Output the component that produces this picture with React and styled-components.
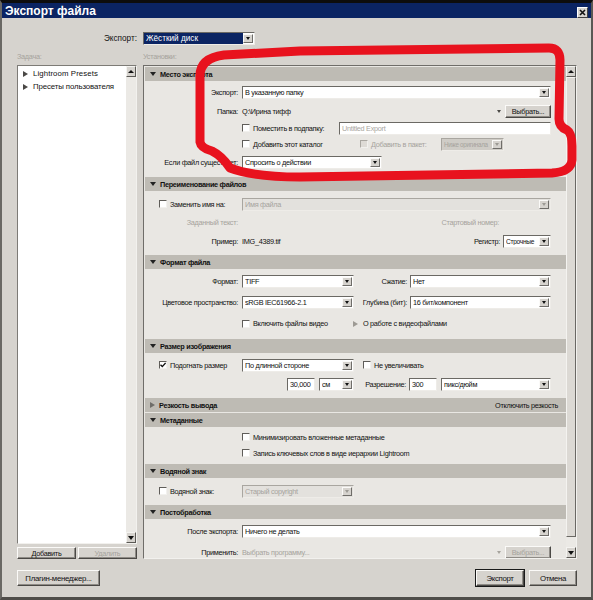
import React from 'react';
import styled, { createGlobalStyle } from 'styled-components';

const GlobalStyle = createGlobalStyle`
  html, body { margin: 0; padding: 0; background: #111; }
  body {
    font-family: "Liberation Sans", Arial, sans-serif;
    font-size: 7.3px;
    letter-spacing: -0.3px;
    color: #111;
  }
  * { box-sizing: border-box; }
`;

const Window = styled.div`
  position: relative;
  width: 593px;
  height: 600px;
  border-top: 3px solid #0d0d0d;
  border-left: 2px solid #6a6864;
  border-right: 2px solid #5a5854;
  border-bottom: 3px solid #4f4d49;
  background: #d6d3ce;
  overflow: hidden;
`;

const TitleBar = styled.div`
  height: 15px;
  background: #0b2463;
  display: flex;
  align-items: center;
  justify-content: space-between;
  padding: 0 3px;
`;

const Title = styled.span`
  color: #fff;
  font-weight: bold;
  font-size: 12px;
  letter-spacing: 0;
`;

const CloseBtn = styled.div`
  width: 11px;
  height: 11px;
  margin-top: 3px;
  background: #d6d3ce;
  border: 1px solid;
  border-color: #fff #404040 #404040 #fff;
  display: flex;
  align-items: center;
  justify-content: center;
`;

const Body = styled.div`
  padding: 14px 14px 0 15px;
  display: flex;
  flex-direction: column;
`;

const TwoCol = styled.div`
  display: grid;
  grid-template-columns: 120px 434px;
  column-gap: 6px;
  height: ${p => p.$h}px;
  margin-top: ${p => p.$mt || 0}px;
  align-items: ${p => p.$align || 'stretch'};
`;

const TopLabel = styled.span`
  text-align: right;
  font-size: 8.2px;
  letter-spacing: 0;
`;

const Caption = styled.span`
  color: #a6a39d;
  line-height: 10px;
`;

const LeftCol = styled.div`
  display: flex;
  flex-direction: column;
  gap: 3px;
`;

const ListBox = styled.div`
  height: 479px;
  display: flex;
  background: #fff;
  border: 1px solid;
  border-color: #7d7b76 #f2f1ee #f2f1ee #7d7b76;
`;

const ListItems = styled.div`
  flex: 1;
  padding-top: 1px;
`;

const ListItem = styled.div`
  height: 13px;
  display: flex;
  align-items: center;
  gap: 5px;
  padding-left: 5px;
  font-size: 7.8px;
  letter-spacing: ${p => p.$ls}px;
`;

const VScroll = styled.div`
  width: 10px;
  display: flex;
  flex-direction: column;
  background: #ebe9e5;
`;

const ScrollBtn = styled.div`
  height: 11px;
  flex: none;
  background: #d6d3ce;
  border: 1px solid;
  border-color: #f4f3f0 #5b5955 #5b5955 #f4f3f0;
  display: flex;
  align-items: center;
  justify-content: center;
`;

const Thumb = styled.div`
  flex: 1;
  background: #dcd9d4;
  border: 1px solid;
  border-color: #f4f3f0 #6a6864 #6a6864 #f4f3f0;
`;

const Track = styled.div`
  flex: ${p => (p.$h ? 'none' : 1)};
  height: ${p => (p.$h ? `${p.$h}px` : 'auto')};
`;

const ButtonPair = styled.div`
  display: grid;
  grid-template-columns: 1fr 1fr;
  gap: 2px;
  height: 12px;
`;

const Button = styled.div`
  width: ${p => (p.$w ? `${p.$w}px` : 'auto')};
  height: ${p => p.$h || 13}px;
  flex: none;
  display: flex;
  align-items: center;
  justify-content: center;
  background: #d6d3ce;
  border: 1px solid;
  border-color: #fbfaf8 #4a4845 #4a4845 #fbfaf8;
  box-shadow: ${p => (p.$default ? '0 0 0 1px #1a1a1a, inset -1px -1px 0 #8e8b86' : 'inset -1px -1px 0 #8e8b86')};
  color: ${p => (p.$disabled ? '#a6a39d' : '#111')};
  font-size: ${p => p.$fs || 7.3}px;
  white-space: nowrap;
`;

const Panel = styled.div`
  height: 494px;
  display: flex;
  background: #e9e7e3;
  border: 1px solid;
  border-color: #6f6d69 #f2f1ee #f2f1ee #6f6d69;
`;

const PanelScroll = styled.div`
  flex: 1;
  overflow: hidden;
  padding: 1px 0 0 1px;
`;

const SectionHead = styled.div`
  height: 14px;
  margin-top: ${p => (p.$first ? 0 : 1)}px;
  background: #bebbb4;
  display: flex;
  align-items: center;
  gap: 4px;
  padding: 0 8px 0 5px;
  font-weight: bold;
`;

const HeadNote = styled.span`
  margin-left: auto;
  font-weight: normal;
`;

const SectionBody = styled.div`
  height: ${p => p.$h}px;
  padding-top: ${p => p.$pt}px;
`;

const Row = styled.div`
  height: ${p => p.$h}px;
  display: flex;
  align-items: center;
  padding-right: 15px;
`;

const Label = styled.span`
  width: 97px;
  flex: none;
  text-align: right;
  padding-right: 4px;
  white-space: nowrap;
  color: ${p => (p.$muted ? '#a6a39d' : '#111')};
`;

const SideLabel = styled.span`
  width: ${p => p.$w}px;
  flex: none;
  text-align: right;
  padding-right: 3px;
  white-space: nowrap;
`;

const Text = styled.span`
  white-space: nowrap;
  color: ${p => (p.$muted ? '#a6a39d' : '#111')};
  margin-left: ${p => p.$ml || 0}px;
  margin-right: ${p => p.$mr || 0}px;
`;

const Fill = styled.span`
  flex: 1;
`;

const CheckItem = styled.span`
  display: flex;
  align-items: center;
  gap: 3px;
  flex: none;
  width: ${p => (p.$w ? `${p.$w}px` : 'auto')};
  padding-left: ${p => p.$pl || 0}px;
  margin-left: ${p => p.$ml || 0}px;
  white-space: nowrap;
  color: ${p => (p.$muted ? '#a6a39d' : '#111')};
`;

const Box = styled.span`
  width: 8px;
  height: 8px;
  flex: none;
  display: flex;
  align-items: center;
  justify-content: center;
  background: ${p => (p.$disabled ? '#dedbd6' : '#fff')};
  border: 1px solid;
  border-color: ${p => (p.$disabled ? '#aaa7a1 #f2f1ee #f2f1ee #aaa7a1' : '#5f5d59 #f2f1ee #f2f1ee #5f5d59')};
`;

const SelectBox = styled.div`
  width: ${p => p.$w}px;
  height: 13px;
  flex: none;
  margin-left: ${p => p.$ml || 0}px;
  display: flex;
  align-items: center;
  padding-left: 2px;
  background: ${p => (p.$disabled ? (p.$dark ? '#cfccc6' : '#e3e1dd') : '#fff')};
  border: 1px solid;
  border-color: ${p => (p.$disabled ? '#a9a6a0 #eeece8 #eeece8 #a9a6a0' : '#6b6964 #eeece8 #eeece8 #6b6964')};
  color: ${p => (p.$disabled ? '#a6a39d' : '#111')};
`;

const FocusText = styled.span`
  flex: 1;
  align-self: stretch;
  display: flex;
  align-items: center;
  margin-left: -2px;
  padding-left: 2px;
  background: #0b2463;
  color: #fff;
  font-size: 8.2px;
  letter-spacing: 0;
`;

const SelectText = styled.span`
  flex: 1;
  min-width: 0;
  overflow: hidden;
  white-space: nowrap;
  font-size: ${p => p.$fs || 7.3}px;
`;

const SelectBtn = styled.span`
  width: 10px;
  height: 9px;
  flex: none;
  margin-right: 1px;
  display: flex;
  align-items: center;
  justify-content: center;
  background: #d6d3ce;
  border: 1px solid;
  border-color: #fbfaf8 #6f6d69 #6f6d69 #fbfaf8;
`;

const Input = styled.div`
  width: ${p => p.$w}px;
  height: 13px;
  flex: none;
  margin-left: ${p => p.$ml || 0}px;
  margin-right: ${p => p.$mr || 0}px;
  display: flex;
  align-items: center;
  padding-left: 2px;
  background: #fff;
  border: 1px solid;
  border-color: #6b6964 #eeece8 #eeece8 #6b6964;
  color: ${p => (p.$muted ? '#aaa7a1' : '#111')};
  white-space: nowrap;
`;

const TriDown = styled.span`
  width: 0;
  height: 0;
  flex: none;
  margin-right: ${p => p.$mr || 0}px;
  border-left: ${p => p.$s}px solid transparent;
  border-right: ${p => p.$s}px solid transparent;
  border-top: ${p => p.$s + 1}px solid ${p => p.$c || '#111'};
`;

const TriUp = styled.span`
  width: 0;
  height: 0;
  border-left: 3px solid transparent;
  border-right: 3px solid transparent;
  border-bottom: 3px solid #111;
`;

const TriRight = styled.span`
  width: 0;
  height: 0;
  flex: none;
  border-top: ${p => p.$s}px solid transparent;
  border-bottom: ${p => p.$s}px solid transparent;
  border-left: ${p => p.$s + 2}px solid ${p => p.$c || '#333'};
`;

const BottomRow = styled.div`
  margin-top: 11px;
  height: 16px;
  display: flex;
  align-items: center;
  gap: 5px;
`;

const Overlay = styled.svg`
  position: absolute;
  top: -3px;
  left: -2px;
  width: 593px;
  height: 600px;
  pointer-events: none;
`;

const Select = ({ w, ml, fs, disabled, dark, focus, children }) => (
  <SelectBox $w={w} $ml={ml} $disabled={disabled} $dark={dark}>
    {focus ? <FocusText>{children}</FocusText> : <SelectText $fs={fs}>{children}</SelectText>}
    <SelectBtn>
      <TriDown $s={2} $c={disabled ? '#9d9a94' : '#111'} />
    </SelectBtn>
  </SelectBox>
);

const Check = ({ checked, disabled }) => (
  <Box $disabled={disabled}>
    {checked && (
      <svg width="6" height="6" viewBox="0 0 6 6">
        <path d="M0.5 2.8 L2.3 4.6 L5.6 0.9" stroke="#111" strokeWidth="1.4" fill="none" />
      </svg>
    )}
  </Box>
);

const Head = ({ title, first, collapsed, note }) => (
  <SectionHead $first={first}>
    {collapsed ? <TriRight $s={3} $c="#6f6d69" /> : <TriDown $s={3} $c="#222" />}
    <span>{title}</span>
    {note && <HeadNote>{note}</HeadNote>}
  </SectionHead>
);

const LeftList = () => (
  <LeftCol>
    <ListBox>
      <ListItems>
        <ListItem $ls={0.1}>
          <TriRight $s={3} $c="#4a4845" />
          <span>Lightroom Presets</span>
        </ListItem>
        <ListItem $ls={-0.1}>
          <TriRight $s={3} $c="#4a4845" />
          <span>Пресеты пользователя</span>
        </ListItem>
      </ListItems>
      <VScroll>
        <ScrollBtn><TriUp /></ScrollBtn>
        <Track />
        <ScrollBtn><TriDown $s={3} $c="#111" /></ScrollBtn>
      </VScroll>
    </ListBox>
    <ButtonPair>
      <Button $h={12}>Добавить</Button>
      <Button $h={12} $disabled>Удалить</Button>
    </ButtonPair>
  </LeftCol>
);

const Settings = () => (
  <Panel>
    <PanelScroll>
      <Head first title="Место экспорта" />
      <SectionBody $h={95} $pt={1}>
        <Row $h={20}>
          <Label>Экспорт:</Label>
          <Select w={309}>В указанную папку</Select>
        </Row>
        <Row $h={18}>
          <Label>Папка:</Label>
          <Text>Q:\Ирина тифф</Text>
          <Fill />
          <TriDown $s={2} $c="#4a4845" $mr={4} />
          <Button $w={46}>Выбрать...</Button>
        </Row>
        <Row $h={16}>
          <Label />
          <CheckItem>
            <Check />
            Поместить в подпапку:
          </CheckItem>
          <Fill />
          <Input $w={212} $muted>Untitled Export</Input>
        </Row>
        <Row $h={16}>
          <Label />
          <CheckItem $w={118}>
            <Check />
            Добавить этот каталог
          </CheckItem>
          <CheckItem $w={81} $muted>
            <Check disabled />
            Добавить в пакет:
          </CheckItem>
          <Select w={63} fs={6.3} disabled dark>Ниже оригинала</Select>
        </Row>
        <Row $h={20}>
          <Label>Если файл существует:</Label>
          <Select w={140}>Спросить о действии</Select>
        </Row>
      </SectionBody>

      <Head title="Переименование файлов" />
      <SectionBody $h={63} $pt={3}>
        <Row $h={20}>
          <CheckItem $w={97} $pl={14}>
            <Check />
            Заменить имя на:
          </CheckItem>
          <Select w={309} disabled>Имя файла</Select>
        </Row>
        <Row $h={16}>
          <Label $muted>Заданный текст:</Label>
          <Fill />
          <Text $muted $mr={52}>Стартовый номер:</Text>
        </Row>
        <Row $h={22}>
          <Label>Пример:</Label>
          <Text>IMG_4389.tif</Text>
          <Fill />
          <Text $mr={3}>Регистр:</Text>
          <Select w={48} fs={6.6}>Строчные</Select>
        </Row>
      </SectionBody>

      <Head title="Формат файла" />
      <SectionBody $h={69} $pt={2}>
        <Row $h={21}>
          <Label>Формат:</Label>
          <Select w={112}>TIFF</Select>
          <SideLabel $w={56}>Сжатие:</SideLabel>
          <Select w={141}>Нет</Select>
        </Row>
        <Row $h={21}>
          <Label>Цветовое пространство:</Label>
          <Select w={112}>sRGB IEC61966-2.1</Select>
          <SideLabel $w={56}>Глубина (бит):</SideLabel>
          <Select w={141}>16 бит/компонент</Select>
        </Row>
        <Row $h={21}>
          <Label />
          <CheckItem $w={111}>
            <Check />
            Включить файлы видео
          </CheckItem>
          <CheckItem>
            <TriRight $s={3} $c="#9d9a94" />
            <Text $ml={2}>О работе с видеофайлами</Text>
          </CheckItem>
        </Row>
      </SectionBody>

      <Head title="Размер изображения" />
      <SectionBody $h={44} $pt={3}>
        <Row $h={18}>
          <CheckItem $w={97} $pl={14}>
            <Check checked />
            Подогнать размер
          </CheckItem>
          <Select w={112}>По длинной стороне</Select>
          <CheckItem $ml={9}>
            <Check />
            Не увеличивать
          </CheckItem>
        </Row>
        <Row $h={20}>
          <Label />
          <Input $w={28} $ml={45} $mr={4}>30,000</Input>
          <Select w={35}>см</Select>
          <SideLabel $w={55}>Разрешение:</SideLabel>
          <Input $w={28} $mr={4}>300</Input>
          <Select w={110}>пикс/дюйм</Select>
        </Row>
      </SectionBody>

      <Head title="Резкость вывода" collapsed note="Отключить резкость" />

      <Head title="Метаданные" />
      <SectionBody $h={36} $pt={2}>
        <Row $h={16}>
          <Label />
          <CheckItem>
            <Check />
            Минимизировать вложенные метаданные
          </CheckItem>
        </Row>
        <Row $h={16}>
          <Label />
          <CheckItem>
            <Check />
            Запись ключевых слов в виде иерархии Lightroom
          </CheckItem>
        </Row>
      </SectionBody>

      <Head title="Водяной знак" />
      <SectionBody $h={26} $pt={3}>
        <Row $h={20}>
          <CheckItem $w={97} $pl={14}>
            <Check />
            Водяной знак:
          </CheckItem>
          <Select w={112} disabled>Старый copyright</Select>
        </Row>
      </SectionBody>

      <Head title="Постобработка" />
      <SectionBody $h={44} $pt={2}>
        <Row $h={20}>
          <Label>После экспорта:</Label>
          <Select w={309}>Ничего не делать</Select>
        </Row>
        <Row $h={22}>
          <Label>Применить:</Label>
          <Text $muted>Выбрать программу...</Text>
          <Fill />
          <TriDown $s={2} $c="#a6a39d" $mr={4} />
          <Button $w={46} $disabled>Выбрать...</Button>
        </Row>
      </SectionBody>
    </PanelScroll>
    <VScroll>
      <ScrollBtn><TriUp /></ScrollBtn>
      <Thumb />
      <Track $h={10} />
      <ScrollBtn><TriDown $s={3} $c="#111" /></ScrollBtn>
    </VScroll>
  </Panel>
);

export default function App() {
  return (
    <>
      <GlobalStyle />
      <Window>
        <TitleBar>
          <Title>Экспорт файла</Title>
          <CloseBtn>
            <svg width="7" height="7" viewBox="0 0 7 7">
              <path d="M1 1 L6 6 M6 1 L1 6" stroke="#111" strokeWidth="1.6" />
            </svg>
          </CloseBtn>
        </TitleBar>
        <Body>
          <TwoCol $h={13} $align="center">
            <TopLabel>Экспорт:</TopLabel>
            <Select w={112} focus>Жёсткий диск</Select>
          </TwoCol>
          <TwoCol $h={10} $mt={7} $align="center">
            <Caption>Задача:</Caption>
            <Caption>Установки:</Caption>
          </TwoCol>
          <TwoCol $h={494} $mt={3}>
            <LeftList />
            <Settings />
          </TwoCol>
          <BottomRow>
            <Button $w={83} $h={16} $fs={7.8}>Плагин-менеджер...</Button>
            <Fill />
            <Button $w={48} $h={16} $fs={7.8} $default>Экспорт</Button>
            <Button $w={48} $h={16} $fs={7.8}>Отмена</Button>
          </BottomRow>
        </Body>
        <Overlay viewBox="0 0 593 600">
          <path
            d="M200 142 L200 76 Q200 58 224 55 L300 51 L549 48 Q560 48 560 60 L559 119 Q559 127 567 130 Q572 133 572 146 L572 160 Q571 172 552 173 L300 177 Q254 177 230 168 Q222 156 212 151 Q201 148 200 142 Z"
            fill="none"
            stroke="#e8121e"
            strokeWidth="9"
            strokeLinejoin="round"
          />
        </Overlay>
      </Window>
    </>
  );
}
